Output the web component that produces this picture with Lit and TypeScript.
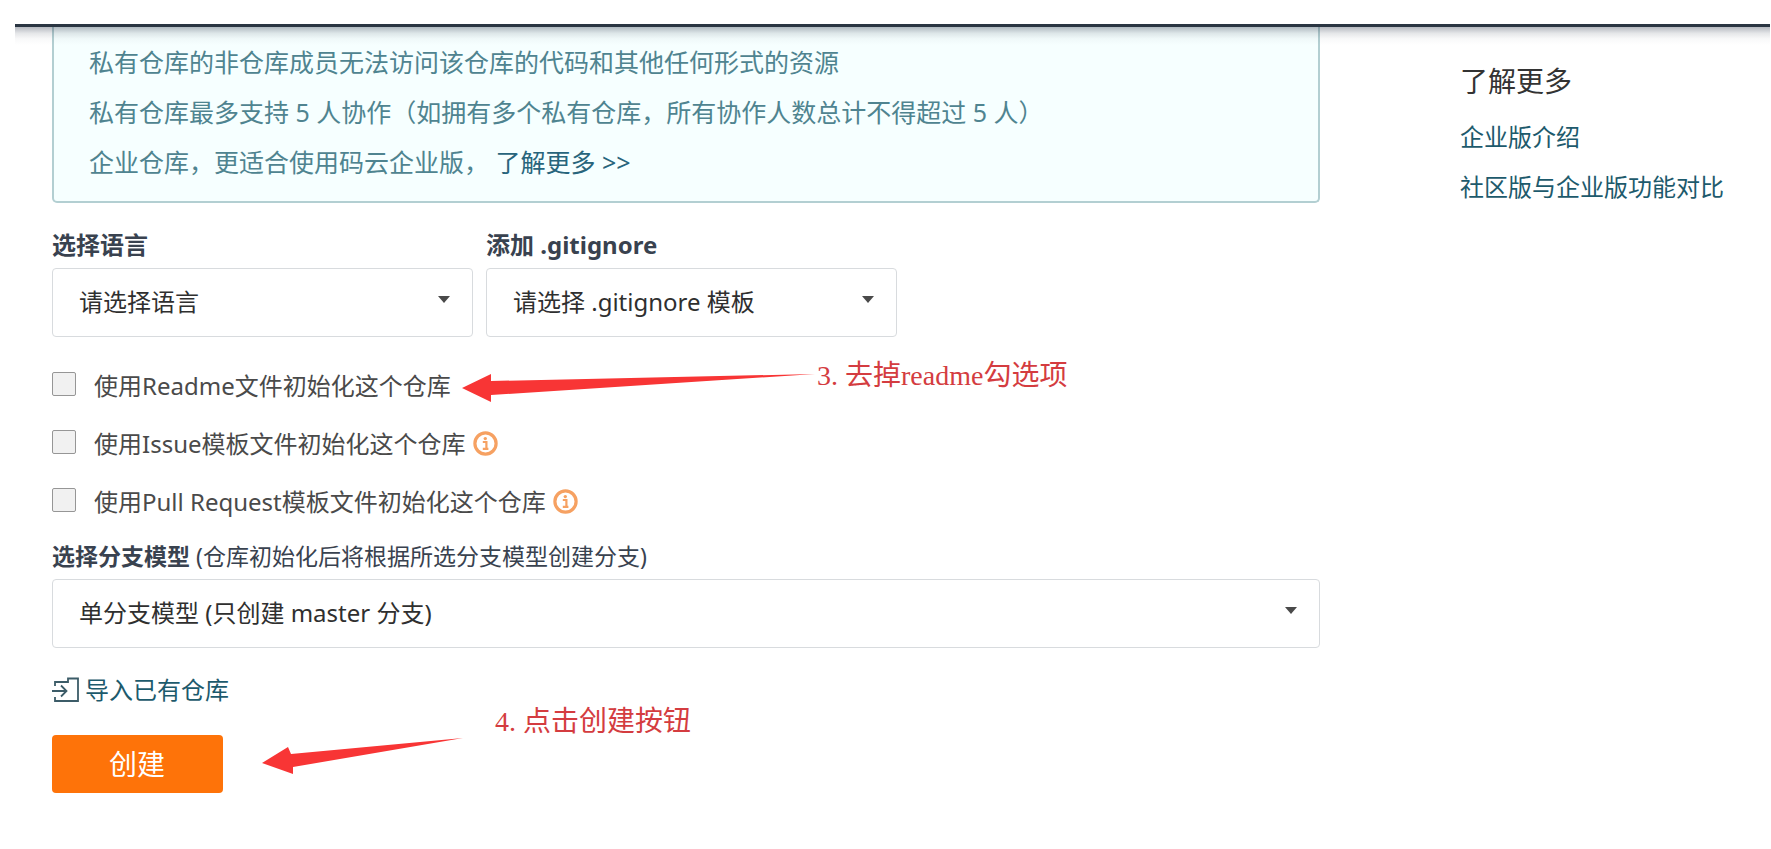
import { LitElement, html, css, svg } from "lit";
import { customElement, property } from "lit/decorators.js";

const caret = html`<svg class="caret" viewBox="0 0 12 7" aria-hidden="true">
  <path d="M0 0h12L6 7z" fill="currentColor" />
</svg>`;

@customElement("info-icon")
class InfoIcon extends LitElement {
  static styles = css`
    :host {
      display: block;
      color: #f6a162;
    }
    .glyph {
      display: block;
      width: 25px;
      height: 25px;
    }
  `;

  render() {
    return html`<svg class="glyph" viewBox="0 0 25 25" aria-hidden="true">
      ${svg`
        <circle cx="12.5" cy="12.5" r="10.6" fill="none" stroke="currentColor" stroke-width="3.2" />
        <circle cx="12.3" cy="7.6" r="1.7" fill="currentColor" />
        <path d="M9.8 11h3.6v6.2M9.8 17.8h5.6" fill="none" stroke="currentColor" stroke-width="2.2" />
      `}
    </svg>`;
  }
}

@customElement("select-field")
class SelectField extends LitElement {
  @property() label = "";
  @property() hint = "";
  @property() option = "";

  static styles = css`
    :host {
      display: block;
      min-width: 0;
    }
    .label {
      display: block;
      margin-bottom: 8px;
      line-height: 30px;
      font-weight: 700;
      color: #39424f;
    }
    .label.small {
      font-size: 23px;
    }
    .hint {
      font-weight: 400;
    }
    .control {
      display: grid;
      align-items: center;
      color: #4a4a4a;
    }
    .select,
    .caret {
      grid-area: 1 / 1;
    }
    .select {
      appearance: none;
      box-sizing: border-box;
      width: 100%;
      height: 69px;
      margin: 0;
      padding: 0 56px 2px 26px;
      border: 1px solid #d8dbde;
      border-radius: 4px;
      background: #fff;
      color: #2f2f2f;
      font: inherit;
    }
    .caret {
      justify-self: end;
      width: 12px;
      height: 7px;
      margin: 0 23px 6px 0;
      pointer-events: none;
    }
  `;

  render() {
    return html`
      <label class="label ${this.hint ? "small" : ""}" for="field"
        >${this.label}${this.hint
          ? html` <span class="hint">${this.hint}</span>`
          : ""}</label
      >
      <div class="control">
        <select class="select" id="field">
          <option>${this.option}</option>
        </select>
        ${caret}
      </div>
    `;
  }
}

@customElement("app-root")
class AppRoot extends LitElement {
  static styles = css`
    :host {
      display: block;
      padding-top: 24px;
      background: #fff;
      font-family: "Noto Sans", "Noto Sans CJK SC", sans-serif;
      font-size: 24px;
      color: #4a4a4a;
    }
    a {
      color: #1d5a6c;
      text-decoration: none;
    }
    .bar {
      position: relative;
      height: 3px;
      margin: 0 1px 0 15px;
      background: #2a3542;
    }
    .bar::after {
      content: "";
      position: absolute;
      z-index: 1;
      top: 100%;
      left: 0;
      right: 0;
      height: 18px;
      background: linear-gradient(
        rgba(40, 50, 70, 0.34),
        rgba(40, 50, 70, 0.12) 35%,
        rgba(40, 50, 70, 0.03) 65%,
        transparent
      );
    }
    .page {
      display: grid;
      grid-template-columns: minmax(0, 1fr) 311px;
      column-gap: 140px;
      padding-left: 52px;
    }
    .main {
      position: relative;
    }
    .notice {
      padding: 10px 35px 14px;
      border: 2px solid #b3cfd2;
      border-top: 0;
      border-radius: 0 0 5px 5px;
      background: #f6ffff;
      color: #4f8490;
      font-size: 25px;
    }
    .notice p {
      margin: 0;
      line-height: 50px;
    }
    .notice a {
      color: #28657c;
    }
    .fields {
      display: grid;
      grid-template-columns: 421fr 411fr 410fr;
      gap: 13px;
      margin-top: 27px;
    }
    .checks {
      margin-top: 18px;
    }
    .check {
      display: flex;
      align-items: center;
      height: 58px;
      gap: 7px;
    }
    .check label {
      display: flex;
      align-items: center;
      gap: 18px;
    }
    .check info-icon {
      margin-top: 2px;
    }
    .box {
      appearance: none;
      box-sizing: border-box;
      width: 24px;
      height: 24px;
      margin: 0;
      border: 1px solid #969696;
      border-radius: 2px;
      background: #f1f1f1;
    }
    .box:checked {
      background: #fe7300;
    }
    .branch {
      margin-top: 12px;
    }
    .import {
      display: flex;
      align-items: center;
      width: fit-content;
      gap: 6px;
      margin-top: 27px;
      line-height: 30px;
    }
    .import-icon {
      width: 27px;
      height: 26px;
      color: #3c5c68;
    }
    .create {
      height: 58px;
      margin: 30px 0 0;
      padding: 0 58px 0 57px;
      border: 0;
      border-radius: 4px;
      background: #fe7309;
      color: #fff;
      font: inherit;
      font-size: 28px;
      line-height: 58px;
    }
    .aside {
      padding-top: 36px;
    }
    .aside h2 {
      margin: 0 0 13px;
      font-size: 28px;
      font-weight: 400;
      line-height: 36px;
      color: #333;
    }
    .aside a {
      display: block;
      line-height: 50px;
    }
    .note {
      position: absolute;
      display: flex;
      font-family: "Liberation Serif", "Noto Sans CJK SC", serif;
      font-size: 28px;
      line-height: 36px;
      white-space: nowrap;
      color: #d43c40;
    }
    .note svg {
      flex: none;
      fill: #f83535;
    }
    .note-readme {
      top: 331px;
      left: 410px;
      gap: 2px;
    }
    .note-readme svg {
      width: 353px;
      height: 28px;
      margin-top: 16px;
    }
    .note-create {
      top: 677px;
      left: 210px;
      gap: 32px;
    }
    .note-create svg {
      width: 201px;
      height: 36px;
      margin-top: 34px;
    }
  `;

  private check(text: string, info: boolean) {
    return html`<div class="check">
      <label><input class="box" type="checkbox" />${text}</label>
      ${info ? html`<info-icon></info-icon>` : ""}
    </div>`;
  }

  render() {
    return html`
      <div class="bar"></div>
      <div class="page">
        <main class="main">
          <section class="notice">
            <p>私有仓库的非仓库成员无法访问该仓库的代码和其他任何形式的资源</p>
            <p>私有仓库最多支持 5 人协作（如拥有多个私有仓库，所有协作人数总计不得超过 5 人）</p>
            <p>企业仓库，更适合使用码云企业版， <a href="#more">了解更多 &gt;&gt;</a></p>
          </section>

          <div class="fields">
            <select-field label="选择语言" option="请选择语言"></select-field>
            <select-field label="添加 .gitignore" option="请选择 .gitignore 模板"></select-field>
          </div>

          <div class="checks">
            ${this.check("使用Readme文件初始化这个仓库", false)}
            ${this.check("使用Issue模板文件初始化这个仓库", true)}
            ${this.check("使用Pull Request模板文件初始化这个仓库", true)}
          </div>

          <select-field
            class="branch"
            label="选择分支模型"
            hint="(仓库初始化后将根据所选分支模型创建分支)"
            option="单分支模型 (只创建 master 分支)"
          ></select-field>

          <a class="import" href="#import">
            <svg class="import-icon" viewBox="0 0 27 26" fill="none" stroke="currentColor" stroke-width="1.8" aria-hidden="true">
              <path d="M3 9V5h13V1.5h10V24H3v-4" />
              <path d="M0 14h14M9 8.5l5.5 5.5L9 19.5" />
            </svg>
            导入已有仓库
          </a>
          <button class="create" type="button">创建</button>

          <div class="note note-readme">
            <svg viewBox="0 0 353 28" aria-hidden="true">
              <path d="M0 14L29 0v7L353 0 29 21v7z" />
            </svg>
            <span>3. 去掉readme勾选项</span>
          </div>
          <div class="note note-create">
            <svg viewBox="0 0 201 36" aria-hidden="true">
              <path d="M0 25L26 9l3 7L201 0 31 29v7z" />
            </svg>
            <span>4. 点击创建按钮</span>
          </div>
        </main>

        <aside class="aside">
          <h2>了解更多</h2>
          <a href="#enterprise">企业版介绍</a>
          <a href="#compare">社区版与企业版功能对比</a>
        </aside>
      </div>
    `;
  }
}
